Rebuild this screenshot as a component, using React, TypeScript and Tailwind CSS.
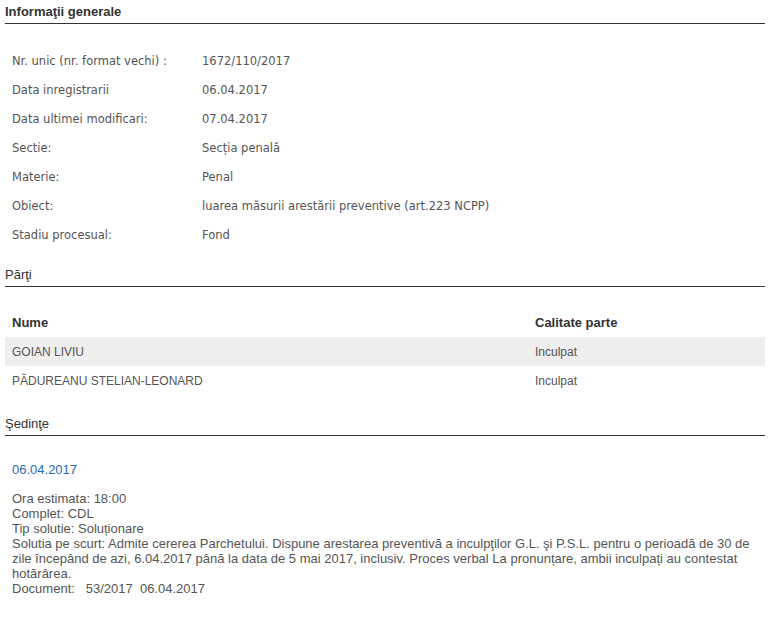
const info: [string, string][] = [
  ['Nr. unic (nr. format vechi) :', '1672/110/2017'],
  ['Data inregistrarii', '06.04.2017'],
  ['Data ultimei modificari:', '07.04.2017'],
  ['Sectie:', 'Secția penală'],
  ['Materie:', 'Penal'],
  ['Obiect:', 'luarea măsurii arestării preventive (art.223 NCPP)'],
  ['Stadiu procesual:', 'Fond'],
]

const parti = [
  { nume: 'GOIAN LIVIU', calitate: 'Inculpat' },
  { nume: 'PĂDUREANU STELIAN-LEONARD', calitate: 'Inculpat' },
]

function SectionTitle({ children, bold }: { children: string; bold?: boolean }) {
  return (
    <div className="border-b border-[#333] pb-[3px]">
      <h2
        className={`text-[13px] leading-[16px] text-[#333] ${bold ? 'font-bold' : 'font-normal'}`}
        style={{ fontFamily: '"Liberation Sans", Arial, sans-serif' }}
      >
        {children}
      </h2>
    </div>
  )
}

export default function App() {
  return (
    <div
      className="w-[781px] h-[632px] bg-white pl-[5px] pr-[16px] pt-[4px] text-[#555]"
      style={{ fontFamily: '"DejaVu Sans", Verdana, sans-serif' }}
    >
      {/* Informatii generale */}
      <SectionTitle bold>Informaţii generale</SectionTitle>
      <div className="pt-[23px] pl-[7px]">
        {info.map(([label, value]) => (
          <div key={label} className="flex h-[29px] items-center text-[11.5px]">
            <span className="w-[190px]">{label}</span>
            <span>{value}</span>
          </div>
        ))}
      </div>

      {/* Parti */}
      <div className="mt-[17px]">
        <SectionTitle>Părţi</SectionTitle>
      </div>
      <div className="pt-[21px] text-[12px]" style={{ fontFamily: '"Liberation Sans", Arial, sans-serif' }}>
        <div className="flex h-[29px] items-center px-[7px] font-bold text-[#333] text-[13px]">
          <span className="w-[523px]">Nume</span>
          <span>Calitate parte</span>
        </div>
        {parti.map((p, i) => (
          <div
            key={p.nume}
            className={`flex h-[29px] items-center px-[7px] ${i === 0 ? 'bg-[#eeeeee]' : ''}`}
          >
            <span className="w-[523px]">{p.nume}</span>
            <span>{p.calitate}</span>
          </div>
        ))}
      </div>

      {/* Sedinte */}
      <div className="mt-[21px]">
        <SectionTitle>Şedinţe</SectionTitle>
      </div>
      <div className="pl-[7px] pt-[26px] text-[13px] leading-[15px]" style={{ fontFamily: '"Liberation Sans", Arial, sans-serif' }}>
        <div className="text-[#2a6ab0] text-[13px]">06.04.2017</div>
        <div className="mt-[14px] whitespace-nowrap">
          <div>Ora estimata: 18:00</div>
          <div>Complet: CDL</div>
          <div>Tip solutie: Soluționare</div>
          <div>
            Solutia pe scurt: Admite cererea Parchetului. Dispune arestarea preventivă a inculpţilor G.L. şi P.S.L. pentru o perioadă de 30 de
            <br />
            zile începând de azi, 6.04.2017 până la data de 5 mai 2017, inclusiv. Proces verbal La pronunțare, ambii inculpați au contestat
            <br />
            hotărârea.
          </div>
          <div className="whitespace-pre">Document:   53/2017  06.04.2017</div>
        </div>
      </div>
    </div>
  )
}
